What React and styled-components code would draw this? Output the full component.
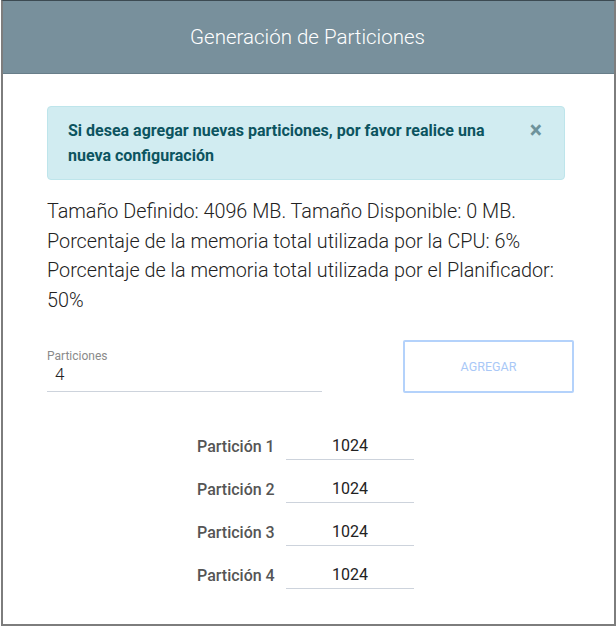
import styled, { createGlobalStyle } from "styled-components";

const Global = createGlobalStyle`
  body {
    margin: 0;
    background: #fff;
    font-family: Roboto, "Liberation Sans", sans-serif;
  }
`;

const partitions = [1, 2, 3, 4];

export default function App() {
  return (
    <>
      <Global />
      <Card>
        <Header>Generación de Particiones</Header>
        <Body>
          <Alert>
            <span>
              Si desea agregar nuevas particiones, por favor realice una nueva
              configuración
            </span>
            <Close>×</Close>
          </Alert>
          <Info>
            Tamaño Definido: 4096 MB. Tamaño Disponible: 0 MB.
            <br />
            Porcentaje de la memoria total utilizada por la CPU: 6%
            <br />
            Porcentaje de la memoria total utilizada por el Planificador: 50%
          </Info>
          <FieldRow>
            <Field>
              <FieldLabel>Particiones</FieldLabel>
              <FieldInput defaultValue="4" />
            </Field>
            <AddButton disabled>Agregar</AddButton>
          </FieldRow>
          <Rows>
            {partitions.map((n) => (
              <Row key={n}>
                <RowLabel>Partición {n}</RowLabel>
                <RowInput defaultValue="1024" />
              </Row>
            ))}
          </Rows>
        </Body>
      </Card>
    </>
  );
}

const Card = styled.div`
  box-sizing: border-box;
  width: 615px;
  height: 626px;
  margin-left: 1px;
  border: 2px solid #7d7d7d;
  border-top: 1px solid #3c4a52;
  display: flex;
  flex-direction: column;
  overflow: hidden;
`;

const Header = styled.div`
  height: 72px;
  flex-shrink: 0;
  background: #78909c;
  border-bottom: 1px solid #687e89;
  color: #fff;
  font-size: 20.5px;
  font-weight: 300;
  display: flex;
  align-items: center;
  justify-content: center;
  padding-right: 2px;
`;

const Body = styled.div`
  padding: 32px 40px 0 44px;
`;

const Alert = styled.div`
  box-sizing: border-box;
  width: 518px;
  min-height: 74px;
  padding: 11px 20px;
  background: #d1ecf1;
  border: 1px solid #bee5eb;
  border-radius: 4px;
  color: #0c5460;
  font-weight: 700;
  font-size: 16px;
  line-height: 25px;
  display: flex;
  justify-content: space-between;
  align-items: flex-start;

  span {
    width: 440px;
  }
`;

const Close = styled.span`
  && {
    width: auto;
  }
  color: #6e939c;
  font-size: 23px;
  font-weight: 700;
  margin-right: 2px;
`;

const Info = styled.div`
  margin-top: 17px;
  font-size: 19.8px;
  font-weight: 300;
  line-height: 29.5px;
  color: #222;
  width: 524px;
`;

const FieldRow = styled.div`
  margin-top: 25px;
  display: flex;
  justify-content: space-between;
  align-items: flex-start;
`;

const Field = styled.div`
  width: 275px;
  padding-top: 9px;
  border-bottom: 1px solid #cdd3dc;
  display: flex;
  flex-direction: column;
`;

const FieldLabel = styled.label`
  font-size: 12px;
  color: #8a8a8a;
  line-height: 14px;
`;

const FieldInput = styled.input`
  border: none;
  outline: none;
  background: transparent;
  font-family: inherit;
  font-size: 17px;
  font-weight: 300;
  color: #222;
  padding: 0 0 6px 8px;
  height: 28px;
  box-sizing: border-box;
`;

const AddButton = styled.button`
  box-sizing: border-box;
  width: 171px;
  height: 53px;
  background: #fff;
  border: 2px solid #b4d2fb;
  border-radius: 2px;
  color: #a9c8f7;
  font-family: inherit;
  font-size: 12.5px;
  text-transform: uppercase;
`;

const Rows = styled.div`
  margin-top: 39px;
  padding-left: 150px;
  display: flex;
  flex-direction: column;
  gap: 15px;
`;

const Row = styled.div`
  display: flex;
  align-items: center;
`;

const RowLabel = styled.div`
  width: 89px;
  font-size: 16px;
  font-weight: 500;
  color: #555;
`;

const RowInput = styled.input`
  box-sizing: border-box;
  width: 128px;
  height: 28px;
  border: none;
  border-bottom: 1px solid #cdd3dc;
  outline: none;
  background: transparent;
  font-family: inherit;
  font-size: 16px;
  color: #222;
  text-align: center;
  padding: 0 0 0 0;
`;
